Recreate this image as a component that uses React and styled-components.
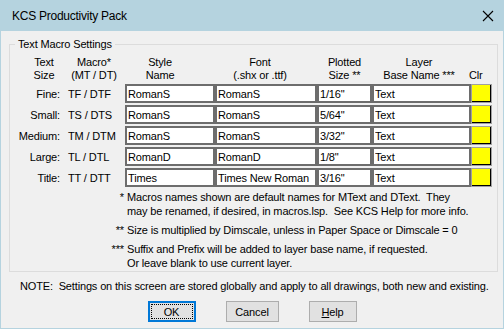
import React from "react";
import styled, { createGlobalStyle } from "styled-components";

const GlobalStyle = createGlobalStyle`
  html, body {
    margin: 0;
    padding: 0;
    background: #f0f0f0;
  }
  * {
    box-sizing: border-box;
  }
`;

const Window = styled.div`
  width: 504px;
  height: 329px;
  border: 1px solid #b5d3df;
  background: #f0f0f0;
  display: flex;
  flex-direction: column;
  font-family: "Liberation Sans", Arial, sans-serif;
  font-size: 11px;
  letter-spacing: -0.15px;
  color: #000;
`;

const TitleBar = styled.div`
  height: 30px;
  background: #b5d3df;
  display: flex;
  align-items: center;
  justify-content: space-between;
  padding: 0 9px 0 11px;
  font-size: 12px;
  letter-spacing: -0.25px;
`;

const CloseIcon = () => (
  <svg width="12" height="12" viewBox="0 0 12 12">
    <path d="M1 1 L11 11 M11 1 L1 11" stroke="#000" strokeWidth="1.1" fill="none" />
  </svg>
);

const Group = styled.fieldset`
  margin: 7px 0 0 8px;
  width: 489px;
  padding: 0 0 1px 0;
  border: 1px solid #dcdcdc;
  min-width: 0;
`;

const Legend = styled.legend`
  margin-left: 5px;
  padding: 0 3px;
  line-height: 13px;
`;

const Header = styled.div`
  display: grid;
  grid-template-columns: 48px 52px 80px 120px 49px 100px auto;
  margin: 5px 0 0 10px;
  line-height: 13px;
`;

const HeadCell = styled.div`
  text-align: ${(p) => (p.$left ? "left" : "center")};
  white-space: nowrap;
`;

const Rows = styled.div`
  display: flex;
  flex-direction: column;
  gap: 2px;
  margin-top: 2px;
`;

const Row = styled.div`
  display: grid;
  grid-template-columns: 50px 65px 90px 102px 55px 99px 21px;
  height: 19px;
  align-items: center;
`;

const SizeLabel = styled.span`
  text-align: right;
  white-space: nowrap;
`;

const Macro = styled.span`
  padding-left: 8px;
  white-space: nowrap;
`;

const Field = styled.input`
  height: 19px;
  width: 100%;
  border: 2px solid #6d6d6d;
  background: #fff;
  font: inherit;
  letter-spacing: inherit;
  color: #000;
  padding: 0 1px;
  margin: 0;
  outline: none;
`;

const Swatch = styled.div`
  height: 19px;
  border: 1px solid #a0a0a0;
  background: ${(p) => p.$color};
  box-shadow: inset -1px -1px 0 #000;
`;

const Notes = styled.div`
  display: flex;
  flex-direction: column;
  gap: 5px;
  margin-top: 3px;
  line-height: 14px;
`;

const Note = styled.div`
  display: grid;
  grid-template-columns: 114px 1fr;
  column-gap: 3px;
`;

const Mark = styled.span`
  text-align: right;
`;

const Footer = styled.div`
  margin: 8px 0 0 19px;
  line-height: 13px;
  white-space: nowrap;
`;

const Buttons = styled.div`
  display: flex;
  justify-content: center;
  gap: 30px;
  margin-top: 8px;
`;

const Button = styled.button`
  width: ${(p) => p.$w}px;
  height: 21px;
  background: #e1e1e1;
  border: 1px solid ${(p) => (p.$default ? "#0078d7" : "#adadad")};
  box-shadow: ${(p) => (p.$default ? "inset 0 0 0 1px #0078d7" : "none")};
  outline: ${(p) => (p.$default ? "1px dotted #000" : "none")};
  outline-offset: -4px;
  font: inherit;
  letter-spacing: inherit;
  color: #000;
  padding: 0;
  margin: 0;
`;

const rows = [
  { size: "Fine:", macro: "TF / DTF", style: "RomanS", font: "RomanS", plot: '1/16"' },
  { size: "Small:", macro: "TS / DTS", style: "RomanS", font: "RomanS", plot: '5/64"' },
  { size: "Medium:", macro: "TM / DTM", style: "RomanS", font: "RomanS", plot: '3/32"' },
  { size: "Large:", macro: "TL / DTL", style: "RomanD", font: "RomanD", plot: '1/8"' },
  { size: "Title:", macro: "TT / DTT", style: "Times", font: "Times New Roman", plot: '3/16"' },
];

export default function App() {
  return (
    <>
      <GlobalStyle />
      <Window>
        <TitleBar>
          <span>KCS Productivity Pack</span>
          <CloseIcon />
        </TitleBar>

        <Group>
          <Legend>Text Macro Settings</Legend>
          <Header>
            <HeadCell>Text<br />Size</HeadCell>
            <HeadCell>Macro*<br />(MT / DT)</HeadCell>
            <HeadCell>Style<br />Name</HeadCell>
            <HeadCell>Font<br />(.shx or .ttf)</HeadCell>
            <HeadCell>Plotted<br />Size **</HeadCell>
            <HeadCell>Layer<br />Base Name ***</HeadCell>
            <HeadCell $left><br />Clr</HeadCell>
          </Header>

          <Rows>
            {rows.map((r) => (
              <Row key={r.size}>
                <SizeLabel>{r.size}</SizeLabel>
                <Macro>{r.macro}</Macro>
                <Field defaultValue={r.style} />
                <Field defaultValue={r.font} />
                <Field defaultValue={r.plot} />
                <Field defaultValue="Text" />
                <Swatch $color="#ffff00" />
              </Row>
            ))}
          </Rows>

          <Notes>
            <Note>
              <Mark>*</Mark>
              <span>
                Macros names shown are default names for MText and DText.&nbsp; They
                <br />
                may be renamed, if desired, in macros.lsp.&nbsp; See KCS Help for more info.
              </span>
            </Note>
            <Note>
              <Mark>**</Mark>
              <span>Size is multiplied by Dimscale, unless in Paper Space or Dimscale = 0</span>
            </Note>
            <Note>
              <Mark>***</Mark>
              <span>
                Suffix and Prefix will be added to layer base name, if requested.
                <br />
                Or leave blank to use current layer.
              </span>
            </Note>
          </Notes>
        </Group>

        <Footer>
          NOTE:&nbsp; Settings on this screen are stored globally and apply to all drawings, both new and existing.
        </Footer>

        <Buttons>
          <Button $w={48} $default>OK</Button>
          <Button $w={53}>Cancel</Button>
          <Button $w={48}><u>H</u>elp</Button>
        </Buttons>
      </Window>
    </>
  );
}
